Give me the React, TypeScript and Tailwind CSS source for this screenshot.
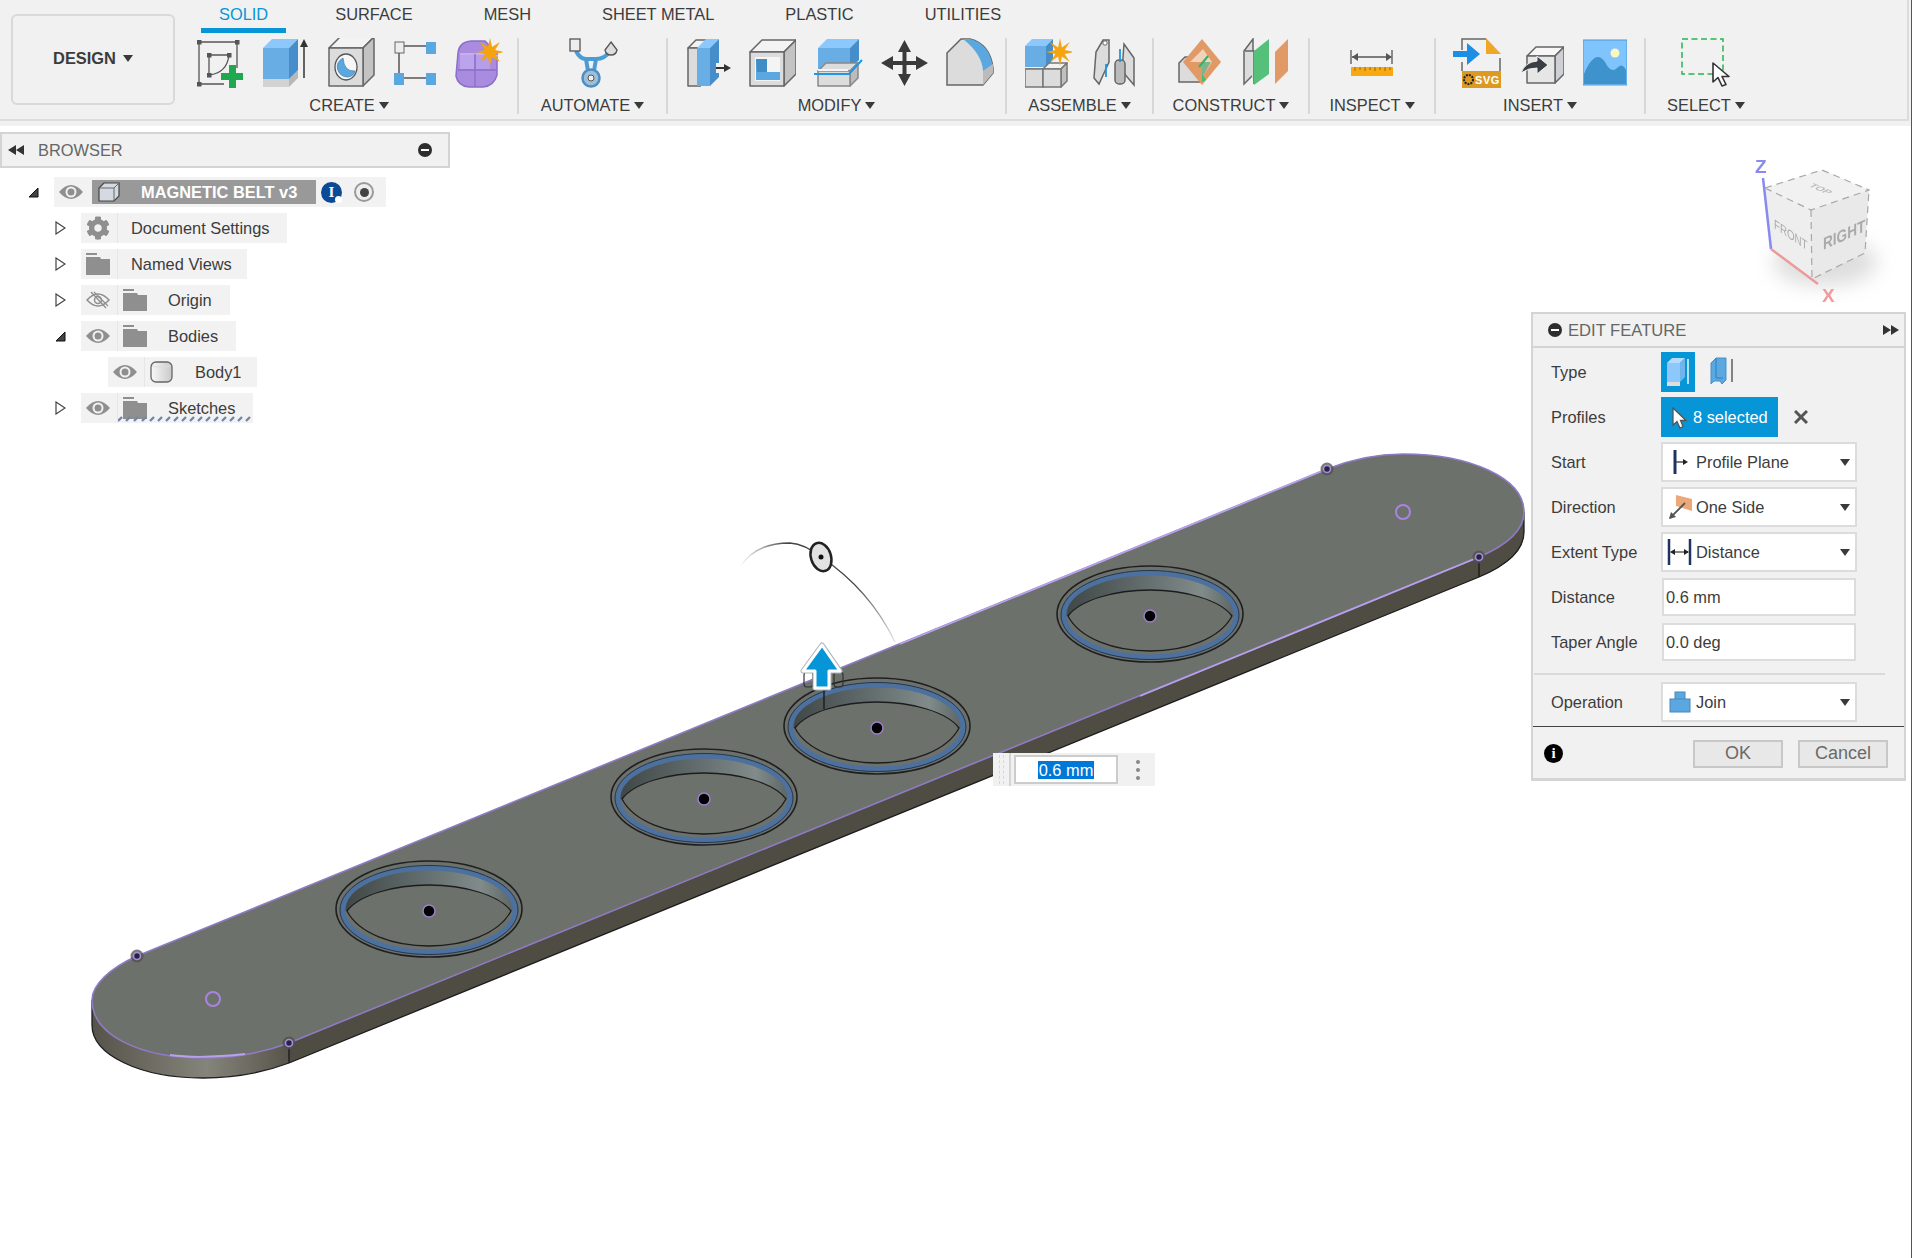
import React from 'react';
import { FaCog } from 'react-icons/fa';

const starPoints = (cx: number, cy: number, r1: number, r2: number, n: number) => {
  const pts: string[] = [];
  for (let i = 0; i < n * 2; i++) {
    const r = i % 2 === 0 ? r1 : r2;
    const a = (Math.PI * i) / n - Math.PI / 2;
    pts.push(`${(cx + r * Math.cos(a)).toFixed(1)},${(cy + r * Math.sin(a)).toFixed(1)}`);
  }
  return pts.join(' ');
};

interface BoxProps {
  x: number;
  y: number;
  w: number;
  h: number;
  d: number;
  front?: string;
  top?: string;
  side?: string;
  stroke?: string;
}

const Box: React.FC<BoxProps> = ({ x, y, w, h, d, front = '#dcdcdc', top = '#f2f2f2', side = '#bcbcbc', stroke = 'none' }) => (
  <g stroke={stroke} strokeWidth="1.5" strokeLinejoin="round">
    <polygon points={`${x},${y} ${x + d},${y - d} ${x + w + d},${y - d} ${x + w},${y}`} fill={top} />
    <polygon points={`${x + w},${y} ${x + w + d},${y - d} ${x + w + d},${y + h - d} ${x + w},${y + h}`} fill={side} />
    <rect x={x} y={y} width={w} height={h} fill={front} />
  </g>
);

const Ico: React.FC<{ w: number; children: React.ReactNode }> = ({ w, children }) => (
  <svg width={w} height={50} viewBox={`0 0 ${w} 50`} className="shrink-0">
    {children}
  </svg>
);

const Handle: React.FC<{ x: number; y: number }> = ({ x, y }) => <rect x={x - 2} y={y - 2} width="4.5" height="4.5" fill="#555" />;

const SketchIcon = () => (
  <Ico w={48}>
    <g stroke="#555" strokeWidth="1.3" fill="none">
      <path d="M3 4H41V30M3 4V46H28" />
      <path d="M13 17H33M13 17V37" />
      <path d="M13 37Q31 35 33 17" />
    </g>
    <Handle x={3} y={4} />
    <Handle x={41} y={4} />
    <Handle x={3} y={46} />
    <Handle x={13} y={17} />
    <Handle x={33} y={17} />
    <Handle x={13} y={37} />
    <path d="M33 27h7v8h7v7h-7v8h-7v-8h-8v-7h8z" fill="#1fa84f" />
  </Ico>
);

const ExtrudeIcon = () => (
  <Ico w={46}>
    <Box x={0} y={41} w={26} h={8} d={9} front="#d2d2d2" side="#b8b8b8" top="#d2d2d2" />
    <Box x={0} y={10} w={26} h={31} d={9} front="#68ade4" top="#8cc8fb" side="#458ec9" />
    <path d="M41 6V40" stroke="#333" strokeWidth="1.5" />
    <path d="M41 1L45 9H37Z" fill="#333" />
  </Ico>
);

const HoleIcon = () => (
  <Ico w={47}>
    <Box x={1} y={10} w={34} h={38} d={11} front="#dcdcdc" top="#f3f3f3" side="#c3c3c3" stroke="#666" />
    <ellipse cx="18" cy="29" rx="11" ry="13" fill="#f6f6f6" stroke="#555" strokeWidth="1.3" />
    <path d="M15 20Q8 24 9.500 31Q12 39 20 39Q26 38 27 33Q16 34 15 20Z" fill="#5ba8e0" stroke="#3f83b8" strokeWidth="0.8" />
  </Ico>
);

const PatternIcon = () => (
  <Ico w={42}>
    <path d="M10 8H33M5 13V35M10 40H33" stroke="#555" strokeWidth="1.5" />
    <rect x="1" y="4" width="9" height="11" fill="#eee" stroke="#666" />
    <rect x="32" y="4" width="10" height="12" fill="#5ba8e0" />
    <rect x="0" y="35" width="10" height="12" fill="#5ba8e0" />
    <rect x="32" y="35" width="10" height="12" fill="#5ba8e0" />
  </Ico>
);

const FormIcon = () => (
  <Ico w={48}>
    <path d="M3 15Q4 4 16 3H30L42 15V37Q39 48 28 49H14Q3 48 1 38Z" fill="#a98be0" stroke="#8c6fc9" strokeWidth="1.5" />
    <path d="M5 16H34L43 18" stroke="#c4b0ee" strokeWidth="2" fill="none" />
    <path d="M3 32H42M20 16V49" stroke="#8c6fc9" strokeWidth="1.3" fill="none" />
    <rect x="5" y="17" width="14" height="14" fill="#bba4ec" />
    <rect x="21" y="17" width="14" height="14" fill="#b69eea" />
    <polygon points={starPoints(35, 14, 14, 5.5, 8)} fill="#f5a30f" />
  </Ico>
);

const AutomateIcon = () => (
  <Ico w={50}>
    <g stroke="#4b9bd5" strokeWidth="4" fill="none">
      <path d="M7 13Q11 21 17 21H27Q36 21 41 13" />
      <path d="M17 21L19 33M27 21L25 33" />
    </g>
    <circle cx="22" cy="40" r="8.5" fill="#9fbfd8" stroke="#4b8fc4" strokeWidth="2.5" />
    <circle cx="22" cy="40" r="3" fill="#eee" stroke="#555" />
    <rect x="1" y="1" width="10" height="12" fill="#eee" stroke="#555" strokeWidth="1.3" />
    <path d="M42 4L48 12Q47 17 42 17Q37 17 36 12Z" fill="#ddd" stroke="#555" strokeWidth="1.3" />
  </Ico>
);

const PressPullIcon = () => (
  <Ico w={44}>
    <Box x={1} y={10} w={12} h={38} d={8} front="#dcdcdc" top="#f2f2f2" side="#bbb" stroke="#666" />
    <Box x={10} y={10} w={13} h={38} d={9} front="#68ade4" top="#8cc8fb" side="#458ec9" />
    <rect x="29" y="25" width="15" height="10" fill="#f1f1f1" />
    <path d="M29 30H39" stroke="#333" strokeWidth="2" />
    <path d="M37 26L44 30L37 34Z" fill="#333" />
  </Ico>
);

const ShellIcon = () => (
  <Ico w={47}>
    <Box x={1} y={14} w={34} h={34} d={12} front="#dcdcdc" top="#f3f3f3" side="#c3c3c3" stroke="#666" />
    <rect x="6" y="19" width="25" height="24" fill="#f4f4f4" />
    <path d="M7 21H18V34H31V42H7Z" fill="#5ba8e0" />
    <path d="M7 21H18V34H8Z" fill="#3f8cc6" />
  </Ico>
);

const CombineIcon = () => (
  <Ico w={49}>
    <Box x={4} y={10} w={32} h={21} d={9} front="#68ade4" top="#8cc8fb" side="#458ec9" />
    <Box x={4} y={33} w={32} h={15} d={8} front="#dcdcdc" top="#dcdcdc" side="#bbb" stroke="#888" />
    <path d="M0 36H35L48 22" stroke="#1f96e6" strokeWidth="2" fill="none" />
    <path d="M4 32H34" stroke="#f4f4f4" strokeWidth="2" />
  </Ico>
);

const MoveIcon = () => (
  <Ico w={47}>
    <path d="M23.5 2L30 14H25.5V23H35V18L47 25L35 32V27H25.5V36H30L23.5 48L17 36H21.5V27H12V32L0 25L12 18V23H21.5V14H17Z" fill="#3a3a3a" />
  </Ico>
);

const FilletIcon = () => (
  <Ico w={48}>
    <path d="M1 15L15 1H24Q44 6 47 30V35L37 47H1Z" fill="#dcdcdc" stroke="#666" strokeWidth="1.5" />
    <path d="M17 1H24Q44 6 47 30L37 33Q36 16 17 1Z" fill="#5ba8e0" />
    <path d="M37 47V33L47 26V35Z" fill="#bbb" />
  </Ico>
);

const NewComponentIcon = () => (
  <Ico w={47}>
    <Box x={0} y={8} w={21} h={21} d={7} front="#68ade4" top="#8cc8fb" side="#458ec9" />
    <Box x={0} y={31} w={18} h={18} d={0} front="#dcdcdc" stroke="#777" />
    <Box x={18} y={31} w={18} h={18} d={6} front="#dcdcdc" side="#c0c0c0" stroke="#777" />
    <polygon points={starPoints(35, 14, 14, 5, 8)} fill="#f5a30f" />
  </Ico>
);

const JointIcon = () => (
  <Ico w={43}>
    <path d="M2 40L4 14L11 2H17V24L7 46Z" fill="#dcdcdc" stroke="#666" strokeWidth="1.5" />
    <circle cx="13" cy="5" r="2.2" fill="#fff" stroke="#666" />
    <path d="M32 6L42 20V47L30 33Z" fill="#dcdcdc" stroke="#666" strokeWidth="1.5" />
    <rect x="23" y="22" width="10" height="24" rx="4" fill="#bbb" stroke="#666" strokeWidth="1.5" />
    <path d="M28 11V24M14 26V39" stroke="#1f96e6" strokeWidth="1.8" />
  </Ico>
);

const PlaneIcon = () => (
  <Ico w={43}>
    <path d="M1 25L7 19H24V44H1Z" fill="#dcdcdc" stroke="#666" strokeWidth="1.5" />
    <path d="M24 1L43 24L24 47L5 24Z" fill="#e19a66" />
    <path d="M12 24L25 11L34 24L25 38H24V24Z" fill="#efd3bd" />
    <path d="M24 24L33 24L24 40Z" fill="#7fb48a" />
    <path d="M24 44V36L28 42Z" fill="#3fc06f" />
    <path d="M21 29L30 18" stroke="#2db562" strokeWidth="2" />
  </Ico>
);

const MidplaneIcon = () => (
  <Ico w={45}>
    <path d="M1 13L10 1V37L1 46Z" fill="#dcdcdc" stroke="#666" strokeWidth="1.5" />
    <path d="M11 46V13H2" fill="#dcdcdc" stroke="#666" strokeWidth="1.5" />
    <path d="M11 13L26 1V36L11 47Z" fill="#55c07a" />
    <path d="M32 46V14L45 1V33Z" fill="#e19a66" />
  </Ico>
);

const MeasureIcon = () => (
  <Ico w={44}>
    <path d="M1 12V26M42 12V26" stroke="#555" strokeWidth="1.3" />
    <path d="M2 19H41" stroke="#555" strokeWidth="1.5" />
    <path d="M8 15V23L2 19ZM36 15V23L42 19Z" fill="#555" />
    <rect x="1" y="29" width="42" height="9" fill="#f9a90f" />
    <path d="M5 29v4M10 29v3M15 29v4M20 29v3M25 29v4M30 29v3M35 29v4M40 29v3" stroke="#8a6a20" />
  </Ico>
);

const InsertSvgIcon = () => (
  <Ico w={48}>
    <path d="M9 12V1H33M47 20V33" stroke="#666" strokeWidth="1.5" fill="none" />
    <path d="M9 24V33" stroke="#666" strokeWidth="1.5" />
    <path d="M33 0L48 16H33Z" fill="#eea825" />
    <path d="M0 13H14V5L27 16L14 27V19H0Z" fill="#1c8ee3" />
    <rect x="9" y="33" width="39" height="17" fill="#dd9a22" />
    <circle cx="15.500" cy="41.500" r="4.500" fill="none" stroke="#222" strokeWidth="2" strokeDasharray="2 1" />
    <text x="22" y="46" fontFamily="Liberation Sans, sans-serif" fontWeight="700" fontSize="11" fill="#fff" letterSpacing="0.6">SVG</text>
  </Ico>
);

const InsertDeriveIcon = () => (
  <Ico w={44}>
    <Box x={7} y={18} w={28} h={27} d={9} front="#e6e6e6" top="#f7f7f7" side="#cfd0d5" stroke="#666" />
    <path d="M1 35Q5 24 17 23V18L28 27L17 36V30Q8 30 1 35Z" fill="#3a3f46" stroke="#f1f1f1" />
  </Ico>
);

const InsertImageIcon = () => (
  <Ico w={44}>
    <rect x="0" y="2" width="44" height="45" fill="#7fc4fc" stroke="#4f9ad8" />
    <circle cx="32" cy="15" r="4.5" fill="#fbf6c4" />
    <path d="M1 36Q12 10 22 24Q28 36 34 30Q39 24 43 32V46H1Z" fill="#3f93cd" />
  </Ico>
);

const SelectIcon = () => (
  <Ico w={50}>
    <rect x="1" y="1" width="41" height="35" fill="none" stroke="#26b552" strokeWidth="1.5" strokeDasharray="6 3.5" />
    <path d="M32 25V44L37 39.5L41 48L45 46.500L41 38.500H48Z" fill="#fff" stroke="#333" strokeWidth="1.6" strokeLinejoin="round" />
  </Ico>
);

const Caret: React.FC<{ className?: string }> = ({ className = '' }) => (
  <svg width="10" height="7" viewBox="0 0 10 7" className={className}>
    <path d="M0 0H10L5 7Z" fill="#3a3a3a" />
  </svg>
);

const Group: React.FC<{ label: string; className: string; iconsClass: string; children: React.ReactNode }> = ({ label, className, iconsClass, children }) => (
  <div className={`flex flex-col items-center h-[76px] shrink-0 ${className}`}>
    <div className={`flex h-[54px] items-start justify-center ${iconsClass}`}>{children}</div>
    <div className="flex items-center gap-[4px] pt-[4px] leading-[26px] text-[16.4px] text-[#3c3c3c]">
      {label}
      <Caret />
    </div>
  </div>
);

const tabs = ['SOLID', 'SURFACE', 'MESH', 'SHEET METAL', 'PLASTIC', 'UTILITIES'];

const Toolbar = () => (
  <div className="h-[126px] bg-[#f1f1f1]">
    <div className="mr-[3px] flex h-[121px] border-b-2 border-r-2 border-[#dcdcdc]">
      <div className="ml-[11px] mt-[14px] flex h-[91px] w-[164px] shrink-0 items-center justify-center gap-[7px] rounded-[6px] border-2 border-[#d9d9d9] pb-[2px] text-[16.4px] font-bold text-[#3c3c3c]">
        DESIGN
        <Caret />
      </div>
      <div className="ml-[6px] flex flex-col">
        <div className="ml-[20px] flex h-[38px] gap-[35px] text-[16.4px] leading-[28px] text-[#3c3c3c]">
          {tabs.map((tab, i) => (
            <div
              key={tab}
              className={i === 0 ? 'h-[33px] -mr-[4px] border-b-[5px] border-[#0696d7] px-[18px] text-[#0696d7]' : 'h-[33px] px-[18px]'}
            >
              {tab}
            </div>
          ))}
        </div>
        <div className="flex">
          <Group label="CREATE" className="w-[338px] border-r-2 border-[#d8d8d8]" iconsClass="gap-[19px]">
            <SketchIcon />
            <ExtrudeIcon />
            <HoleIcon />
            <PatternIcon />
            <FormIcon />
          </Group>
          <Group label="AUTOMATE" className="w-[149px] border-r-2 border-[#d8d8d8]" iconsClass="pl-[2px]">
            <AutomateIcon />
          </Group>
          <Group label="MODIFY" className="w-[339px] border-r-2 border-[#d8d8d8]" iconsClass="gap-[18px] pl-[7px]">
            <PressPullIcon />
            <ShellIcon />
            <CombineIcon />
            <MoveIcon />
            <FilletIcon />
          </Group>
          <Group label="ASSEMBLE" className="w-[147px] border-r-2 border-[#d8d8d8]" iconsClass="gap-[20px]">
            <NewComponentIcon />
            <JointIcon />
          </Group>
          <Group label="CONSTRUCT" className="w-[156px] border-r-2 border-[#d8d8d8]" iconsClass="gap-[22px] pl-[4px]">
            <PlaneIcon />
            <MidplaneIcon />
          </Group>
          <Group label="INSPECT" className="w-[126px] border-r-2 border-[#d8d8d8]" iconsClass="">
            <MeasureIcon />
          </Group>
          <Group label="INSERT" className="w-[210px] border-r-2 border-[#d8d8d8]" iconsClass="gap-[19px]">
            <InsertSvgIcon />
            <InsertDeriveIcon />
            <InsertImageIcon />
          </Group>
          <Group label="SELECT" className="w-[120px]" iconsClass="">
            <SelectIcon />
          </Group>
        </div>
      </div>
    </div>
  </div>
);

const Eye = () => (
  <svg width="24" height="16" viewBox="0 0 24 16">
    <path d="M0 8Q12 -6 24 8Q12 22 0 8Z" fill="#8f8f8f" />
    <circle cx="12" cy="8" r="5.5" fill="#f1f1f1" />
    <circle cx="12" cy="8" r="3.5" fill="#8f8f8f" />
  </svg>
);

const EyeOff = () => (
  <svg width="24" height="18" viewBox="0 0 24 18">
    <path d="M1 9Q12 -3 23 9Q12 21 1 9Z" fill="none" stroke="#8f8f8f" strokeWidth="1.5" />
    <circle cx="12" cy="9" r="3.5" fill="none" stroke="#8f8f8f" strokeWidth="1.5" />
    <path d="M5 1L20 17M8 1L22 15" stroke="#8f8f8f" strokeWidth="1.3" />
  </svg>
);

const Folder = () => (
  <svg width="24" height="22" viewBox="0 0 24 22">
    <path d="M0 0H11V2H0ZM0 4H14L15 6H24V22H0Z" fill="#8f8f8f" />
  </svg>
);

const Cylinder = () => (
  <svg width="23" height="22" viewBox="0 0 23 22">
    <defs>
      <linearGradient id="cyl" x1="0" x2="1" y1="0" y2="0">
        <stop offset="0" stopColor="#f8f8f8" />
        <stop offset="1" stopColor="#c9c9c9" />
      </linearGradient>
    </defs>
    <rect x="1" y="1" width="21" height="20" rx="5" fill="url(#cyl)" stroke="#666" strokeWidth="1.3" />
    <path d="M2 5Q11 8 21 5" stroke="#ddd" fill="none" />
  </svg>
);

const Expand: React.FC<{ open?: boolean }> = ({ open }) =>
  open ? (
    <svg width="11" height="11" viewBox="0 0 11 11">
      <path d="M1 10L10 1V10Z" fill="#444" stroke="#111" strokeWidth="1" />
    </svg>
  ) : (
    <svg width="11" height="14" viewBox="0 0 11 14">
      <path d="M1 1L10 7L1 13Z" fill="#fff" stroke="#444" strokeWidth="1.2" />
    </svg>
  );

const TreeRow: React.FC<{
  indentClass: string;
  paddingClass?: string;
  expand?: 'open' | 'closed';
  eye?: React.ReactNode;
  icon?: React.ReactNode;
  label: string;
  sketches?: boolean;
}> = ({ indentClass, paddingClass = 'pr-[18px]', expand, eye, icon, label, sketches }) => (
  <div className={`flex h-[30px] items-center ${indentClass}`}>
    <div className="flex w-[26px] shrink-0 justify-start">{expand && <Expand open={expand === 'open'} />}</div>
    <div className={`relative flex h-[30px] items-center bg-[#f2f2f2] ${paddingClass}`}>
      <div className="flex h-[30px] w-[37px] items-center justify-center border-r border-[#e6e6e6] pr-[2px]">{eye}</div>
      <div className="flex w-[13px] justify-start" />
      {icon && <div className="-ml-[8px] flex w-[45px] items-center">{icon}</div>}
      <span className="pt-px text-[16.4px] text-[#3c3c3c]">{label}</span>
      {sketches && (
        <svg width="134" height="8" viewBox="0 0 134 8" className="absolute left-[37px] bottom-0">
          <path d="M0 6L4 2M8 6L12 2M16 6L20 2M24 6L28 2M32 6L36 2M40 6L44 2M48 6L52 2M56 6L60 2M64 6L68 2M72 6L76 2M80 6L84 2M88 6L92 2M96 6L100 2M104 6L108 2M112 6L116 2M120 6L124 2M128 6L132 2" stroke="#6f86ad" strokeWidth="2.4" />
        </svg>
      )}
    </div>
  </div>
);

const Browser = () => (
  <div className="absolute left-0 top-[6px] w-[450px]">
    <div className="flex h-[36px] items-center border-2 border-[#d4d4d4] bg-[#f1f1f1] text-[16.4px] text-[#666]">
      <svg width="16" height="10" viewBox="0 0 16 10" className="ml-[6px]">
        <path d="M8 0V10L0 5ZM16 0V10L8 5Z" fill="#333" />
      </svg>
      <span className="ml-[14px]">BROWSER</span>
      <div className="ml-auto mr-[16px] flex h-[14px] w-[14px] items-center justify-center rounded-full bg-[#2e2e2e]">
        <div className="h-[2px] w-[8px] bg-white" />
      </div>
    </div>
    <div className="mt-[9px] flex h-[30px] items-center pl-[28px]">
      <div className="w-[26px]">
        <Expand open />
      </div>
      <div className="flex h-[30px] items-center bg-[#f2f2f2]">
        <div className="flex w-[38px] justify-center pr-[4px]">
          <Eye />
        </div>
        <div className="flex h-[24px] w-[224px] items-center bg-[#999] pl-[6px]">
          <svg width="22" height="20" viewBox="0 0 22 20">
            <path d="M1 6L6 1H21V14L16 19H1Z" fill="#d5dae2" stroke="#444" strokeWidth="1.2" />
            <path d="M1 6H16V19M16 6L21 1" stroke="#666" fill="none" />
          </svg>
          <span className="ml-[21px] text-[16.4px] font-bold text-white">MAGNETIC BELT v3</span>
        </div>
        <div className="relative ml-[5px] flex h-[21px] w-[21px] items-center justify-center rounded-full bg-[#0a4a96] font-['Liberation_Serif',serif] text-[15px] font-bold text-white">
          I
          <div className="absolute bottom-0 right-0 h-[7px] w-[7px] rounded-full bg-white" />
        </div>
        <div className="ml-[12px] mr-[12px] flex h-[20px] w-[20px] items-center justify-center rounded-full border-2 border-[#9a9a9a] bg-[#eee]">
          <div className="h-[9px] w-[9px] rounded-full bg-[#444]" />
        </div>
      </div>
    </div>
    <div className="mt-[6px] flex flex-col gap-[6px]">
      <TreeRow indentClass="pl-[55px]" expand="closed" eye={<FaCog className="h-[24px] w-[24px] text-[#8f8f8f]" />} label="Document Settings" />
      <TreeRow indentClass="pl-[55px]" paddingClass="pr-[15px]" expand="closed" eye={<Folder />} label="Named Views" />
      <TreeRow indentClass="pl-[55px]" expand="closed" eye={<EyeOff />} icon={<Folder />} label="Origin" />
      <TreeRow indentClass="pl-[55px]" expand="open" eye={<Eye />} icon={<Folder />} label="Bodies" />
      <TreeRow indentClass="pl-[82px]" paddingClass="pr-[16px]" eye={<Eye />} icon={<Cylinder />} label="Body1" />
      <TreeRow indentClass="pl-[55px]" expand="closed" eye={<Eye />} icon={<Folder />} label="Sketches" sketches />
    </div>
  </div>
);

const Dropdown: React.FC<{ icon: React.ReactNode; label: string }> = ({ icon, label }) => (
  <div className="flex h-[40px] w-[196px] items-center border-2 border-[#dcdcdc] bg-white pr-[5px] text-[16.4px] text-[#3c3c3c]">
    <div className="flex w-[33px] shrink-0 items-center justify-center">{icon}</div>
    <span className="pt-px">{label}</span>
    <Caret className="ml-auto" />
  </div>
);

const FieldRow: React.FC<{ label: string; className?: string; children: React.ReactNode }> = ({ label, className = '', children }) => (
  <div className={`flex items-center ${className}`}>
    <div className="w-[110px] shrink-0 pt-px text-[16.4px] text-[#3c3c3c]">{label}</div>
    {children}
  </div>
);

const NumberInput: React.FC<{ value: string }> = ({ value }) => (
  <div className="ml-px flex h-[38px] w-[194px] items-center border-2 border-[#dcdcdc] bg-white pl-[2px] pt-px text-[16.4px] text-[#3c3c3c]">{value}</div>
);

const EditFeature = () => (
  <div className="absolute left-[1531px] top-[186px] w-[375px]">
    <div className="flex h-[36px] items-center border-2 border-[#d4d4d4] bg-[#f1f1f1] text-[16.6px] text-[#666]">
      <div className="ml-[15px] flex h-[14px] w-[14px] items-center justify-center rounded-full bg-[#2e2e2e]">
        <div className="h-[2px] w-[8px] bg-white" />
      </div>
      <span className="ml-[6px] pt-[2px]">EDIT FEATURE</span>
      <svg width="16" height="10" viewBox="0 0 16 10" className="ml-auto mr-[5px]">
        <path d="M0 0V10L8 5ZM8 0V10L16 5Z" fill="#333" />
      </svg>
    </div>
    <div className="flex h-[433px] flex-col border-x-2 border-b-[3px] border-[#d4d4d4] bg-[#f1f1f1]">
      <div className="flex flex-col pl-[18px] pt-[4px]">
        <FieldRow label="Type">
          <div className="flex h-[40px] w-[34px] items-center justify-center bg-[#0696d7]">
            <svg width="24" height="32" viewBox="0 0 24 32">
              <Box x={1} y={7} w={13} h={19} d={5} front="#8cc8fb" top="#b5dcfc" side="#6fb4ea" />
              <rect x="1" y="26" width="13" height="4" fill="#ddd" />
              <path d="M22 3V28" stroke="#fff" strokeWidth="1.4" />
            </svg>
          </div>
          <svg width="24" height="32" viewBox="0 0 24 32" className="ml-[15px]">
            <path d="M1 7L6 2H16V24L12 28L10 25H4L1 28Z" fill="#5ba8e0" stroke="#4a8fc8" />
            <path d="M6 2V22H13" stroke="#2f7fbb" fill="none" />
            <path d="M22 3V26" stroke="#555" strokeWidth="1.4" />
          </svg>
        </FieldRow>
        <FieldRow label="Profiles" className="mt-[5px]">
          <div className="flex h-[40px] w-[117px] items-center bg-[#0696d7] pl-[11px] pt-px text-[16.4px] text-white">
            <svg width="15" height="22" viewBox="0 0 15 22">
              <path d="M1 1V18L5 14.500L8 21L11 19.500L8.500 13.500H14Z" fill="#fff" stroke="#555" strokeWidth="1.3" />
            </svg>
            <span className="ml-[6px]">8 selected</span>
          </div>
          <svg width="14" height="14" viewBox="0 0 14 14" className="ml-[16px]">
            <path d="M1 1L13 13M13 1L1 13" stroke="#555" strokeWidth="3" />
          </svg>
        </FieldRow>
        <FieldRow label="Start" className="mt-[5px]">
          <Dropdown
            label="Profile Plane"
            icon={
              <svg width="16" height="24" viewBox="0 0 16 24">
                <path d="M3 0V24" stroke="#1d3461" strokeWidth="3" />
                <path d="M3 12H12" stroke="#333" strokeWidth="1.3" />
                <path d="M11 9L16 12L11 15Z" fill="#222" />
              </svg>
            }
          />
        </FieldRow>
        <FieldRow label="Direction" className="mt-[5px]">
          <Dropdown
            label="One Side"
            icon={
              <svg width="24" height="26" viewBox="0 0 24 26">
                <path d="M8 1L24 5V17L8 12Z" fill="#eda87a" />
                <path d="M17 9L2 24" stroke="#555" strokeWidth="1.8" />
                <path d="M1 25L3 18L8 23Z" fill="#555" />
              </svg>
            }
          />
        </FieldRow>
        <FieldRow label="Extent Type" className="mt-[5px]">
          <Dropdown
            label="Distance"
            icon={
              <svg width="25" height="26" viewBox="0 0 25 26">
                <path d="M2 0V26M23 0V26" stroke="#1d3461" strokeWidth="2.5" />
                <path d="M4 13H21" stroke="#333" strokeWidth="1.2" />
                <path d="M8 10V16L3 13ZM17 10V16L22 13Z" fill="#222" />
              </svg>
            }
          />
        </FieldRow>
        <FieldRow label="Distance" className="mt-[6px]">
          <NumberInput value="0.6 mm" />
        </FieldRow>
        <FieldRow label="Taper Angle" className="mt-[7px]">
          <NumberInput value="0.0 deg" />
        </FieldRow>
      </div>
      <div className="ml-px mt-[12px] h-[2px] w-[351px] bg-[#dadada]" />
      <div className="mt-[7px] pl-[18px]">
        <FieldRow label="Operation">
          <Dropdown
            label="Join"
            icon={
              <svg width="22" height="22" viewBox="0 0 22 22">
                <rect x="6" y="1" width="10" height="12" fill="#5ba8e0" stroke="#4a88b8" />
                <rect x="1" y="8" width="20" height="13" fill="#5ba8e0" stroke="#4a88b8" />
              </svg>
            }
          />
        </FieldRow>
      </div>
      <div className="mt-[4px] flex flex-1 items-center border-t border-[#444] pl-[11px] pr-[16px] pt-[2px]">
        <div className="flex h-[19px] w-[19px] items-center justify-center rounded-full bg-black font-['Liberation_Serif',serif] text-[15px] font-bold leading-none text-white">i</div>
        <div className="ml-auto flex h-[28px] w-[90px] items-center justify-center border-2 border-[#c8c8c8] bg-[#e8e8e8] text-[18px] text-[#6a6a6a]">OK</div>
        <div className="ml-[15px] flex h-[28px] w-[90px] items-center justify-center border-2 border-[#c8c8c8] bg-[#e8e8e8] text-[18px] text-[#6a6a6a]">Cancel</div>
      </div>
    </div>
  </div>
);

const DistanceInput = () => (
  <div className="absolute left-[993px] top-[627px] flex h-[33px] w-[162px] items-center bg-[#f1f1f1]">
    <div className="ml-[6px] h-[29px] w-[5px] border-x border-dashed border-[#d8d8d8]" />
    <div className="ml-[5px] h-[33px] w-[2px] bg-[#d4d4d4]" />
    <div className="ml-[3px] flex h-[29px] w-[104px] items-center justify-center border-2 border-[#ccc] bg-white">
      <span className="bg-[#0078d7] px-px text-[16.4px] leading-[18px] text-white">0.6 mm</span>
    </div>
    <div className="ml-[18px] flex flex-col gap-[4px]">
      <div className="h-[4px] w-[4px] rounded-full bg-[#888]" />
      <div className="h-[4px] w-[4px] rounded-full bg-[#888]" />
      <div className="h-[4px] w-[4px] rounded-full bg-[#888]" />
    </div>
  </div>
);

const Hole: React.FC<{ x: number; y: number }> = ({ x, y }) => (
  <g>
    <ellipse cx={x} cy={y} rx="93" ry="48" fill="#6d716c" stroke="#1f1f1f" strokeWidth="1.6" />
    <path d={`M${x - 86} ${y + 2}A86 42 0 0 1 ${x + 86} ${y + 2}Z`} fill="url(#wall)" />
    <ellipse cx={x} cy={y + 1} rx="86" ry="42" fill="none" stroke="#4c719f" strokeWidth="5" />
    <ellipse cx={x} cy={y + 1} rx="89" ry="44.500" fill="none" stroke="#24364f" strokeWidth="1" />
    <path
      d={`M${x - 82} ${y + 2}C${x - 70} ${y - 14} ${x - 35} ${y - 24} ${x} ${y - 24}C${x + 35} ${y - 24} ${x + 70} ${y - 14} ${x + 82} ${y + 2}C${x + 70} ${y + 25} ${x + 35} ${y + 37} ${x} ${y + 37}C${x - 35} ${y + 37} ${x - 70} ${y + 25} ${x - 82} ${y + 2}Z`}
      fill="#6d716c"
      stroke="#1c1c1c"
      strokeWidth="1.3"
    />
    <circle cx={x} cy={y + 2} r="6" fill="#000" stroke="#9a7fc9" strokeWidth="1.5" />
  </g>
);

const Vertex: React.FC<{ x: number; y: number }> = ({ x, y }) => (
  <g>
    <circle cx={x} cy={y} r="6.500" fill="#4f4f4f" opacity="0.75" />
    <circle cx={x} cy={y} r="3.500" fill="#2a2140" stroke="#a58fd8" strokeWidth="1.6" />
  </g>
);

const topFace =
  'M137 956L1327 469C1350 460 1375 454 1403 454C1470 454 1524 478 1524 512C1524 532 1505 546 1479 557L289 1043C265 1052 235 1058 203 1058C140 1058 92 1035 92 1000C92 985 110 968 137 956Z';
const sideFace =
  'M1524 512V532C1524 552 1505 566 1479 577L289 1063C265 1072 235 1078 203 1078C140 1078 92 1055 92 1025V1000C92 1035 140 1058 203 1058C235 1058 265 1052 289 1043L1479 557C1505 546 1524 532 1524 512Z';

const Model = () => (
  <svg width="1912" height="1132" viewBox="0 126 1912 1132" className="absolute left-0 top-0">
    <defs>
      <linearGradient id="wall" x1="0" x2="1" y1="0" y2="0">
        <stop offset="0" stopColor="#3f4646" />
        <stop offset="0.5" stopColor="#667070" />
        <stop offset="0.8" stopColor="#808b8a" />
        <stop offset="1" stopColor="#5c6463" />
      </linearGradient>
      <linearGradient id="side" gradientUnits="userSpaceOnUse" x1="92" x2="300" y1="0" y2="0">
        <stop offset="0" stopColor="#55534a" />
        <stop offset="0.55" stopColor="#85847a" />
        <stop offset="1" stopColor="#514e46" />
      </linearGradient>
      <linearGradient id="arc" gradientUnits="userSpaceOnUse" x1="740" x2="895" y1="0" y2="0">
        <stop offset="0" stopColor="#444" stopOpacity="0" />
        <stop offset="0.3" stopColor="#444" />
        <stop offset="0.75" stopColor="#444" />
        <stop offset="1" stopColor="#444" stopOpacity="0.15" />
      </linearGradient>
      <filter id="cubeShadow" x="-40%" y="-40%" width="180%" height="180%">
        <feGaussianBlur stdDeviation="10" />
      </filter>
      <filter id="soft" x="-5%" y="-5%" width="110%" height="110%">
        <feGaussianBlur stdDeviation="0.6" />
      </filter>
    </defs>

    {/* view cube */}
    <ellipse cx="1825" cy="262" rx="52" ry="24" fill="#aaa" opacity="0.4" filter="url(#cubeShadow)" />
    <g filter="url(#soft)">
      <polygon points="1765,188 1822,170 1869,190 1811,210" fill="#f1f1f1" />
      <polygon points="1765,188 1811,210 1812,279 1770,249" fill="#eeeeee" />
      <polygon points="1811,210 1869,190 1865,253 1812,279" fill="#e9e9e9" />
      <g stroke="#a8a8a8" strokeWidth="1.2" strokeDasharray="7 5" fill="none">
        <path d="M1765 188L1822 170L1869 190L1811 210Z" />
        <path d="M1811 210L1812 279L1865 253L1869 190" />
      </g>
      <text transform="matrix(0.75 0.5 0 1 1774 228)" fontFamily="Liberation Sans, sans-serif" fontSize="13" fill="#aaa">FRONT</text>
      <text transform="matrix(0.8 -0.36 0 1 1823 250)" fontFamily="Liberation Sans, sans-serif" fontWeight="700" fontSize="17" fill="#aaa">RIGHT</text>
      <text transform="matrix(0.8 0.35 -0.7 0.35 1808 186)" fontFamily="Liberation Sans, sans-serif" fontWeight="700" fontSize="12" fill="#bbb">TOP</text>
      <path d="M1763 178L1771 249" stroke="#8a8aee" strokeWidth="2.500" />
      <path d="M1771 249L1818 284" stroke="#ee9a9a" strokeWidth="2.500" />
      <text x="1755" y="173" fontFamily="Liberation Sans, sans-serif" fontWeight="700" fontSize="19" fill="#8a8aee">Z</text>
      <text x="1822" y="302" fontFamily="Liberation Sans, sans-serif" fontWeight="700" fontSize="19" fill="#f29a9a">X</text>
    </g>

    {/* plate */}
    <path d={sideFace} fill="url(#side)" />
    <path d="M289 1063L1479 577C1505 566 1524 552 1524 532V512C1524 532 1505 546 1479 557L289 1043Z" fill="#4f4c44" />
    <path
      d="M1524 512V532C1524 552 1505 566 1479 577L289 1063C265 1072 235 1078 203 1078C140 1078 92 1055 92 1025V1000"
      fill="none"
      stroke="#1e1e1e"
      strokeWidth="1.3"
    />
    <path d="M289 1043V1063M1479 557V577" stroke="#1a1a1a" strokeWidth="1.3" />
    <path d={topFace} fill="#6d716c" stroke="#8f7ac4" strokeWidth="1.6" />
    <path d="M900 644L1327 469M1140 696L1479 557M170 1055Q200 1059 245 1054" fill="none" stroke="#b7a2ea" strokeWidth="1.8" />
    <Hole x={429} y={909} />
    <Hole x={704} y={797} />
    <Hole x={877} y={726} />
    <Hole x={1150} y={614} />
    <Vertex x={137} y={956} />
    <Vertex x={289} y={1043} />
    <Vertex x={1327} y={469} />
    <Vertex x={1479} y={557} />
    <circle cx="213" cy="999" r="7" fill="none" stroke="#a884e0" strokeWidth="2" />
    <circle cx="1403" cy="512" r="7" fill="none" stroke="#a884e0" strokeWidth="2" />

    {/* manipulators */}
    <path d="M740 567Q755 543 790 543Q805 544 821 557Q870 590 895 642" fill="none" stroke="url(#arc)" strokeWidth="1.4" />
    <ellipse cx="821" cy="557" rx="10" ry="14.500" transform="rotate(-18 821 557)" fill="#e2e2e2" stroke="#222" strokeWidth="2.500" />
    <circle cx="821" cy="557" r="2.500" fill="#111" />
    <path d="M824 688V709" stroke="#222" strokeWidth="1.6" />
    <rect x="804" y="672" width="9" height="15" rx="3" fill="none" stroke="#333" strokeWidth="1.2" />
    <rect x="834" y="672" width="9" height="15" rx="3" fill="none" stroke="#333" strokeWidth="1.2" />
    <path d="M822 645L840 671H829V688H815V671H803Z" fill="#0696d7" stroke="#aab4bb" strokeWidth="5" strokeLinejoin="round" />
    <path d="M822 645L840 671H829V688H815V671H803Z" fill="#0696d7" stroke="#fff" strokeWidth="3" strokeLinejoin="round" />
  </svg>
);

export default function App() {
  return (
    <div className="relative h-[1258px] w-[1912px] overflow-hidden bg-white font-['Liberation_Sans',Arial,sans-serif]">
      <Toolbar />
      <div className="relative h-[1132px]">
        <Model />
        <Browser />
        <EditFeature />
        <DistanceInput />
      </div>
      <div className="absolute right-0 top-0 h-full w-px bg-[#555]" />
    </div>
  );
}
